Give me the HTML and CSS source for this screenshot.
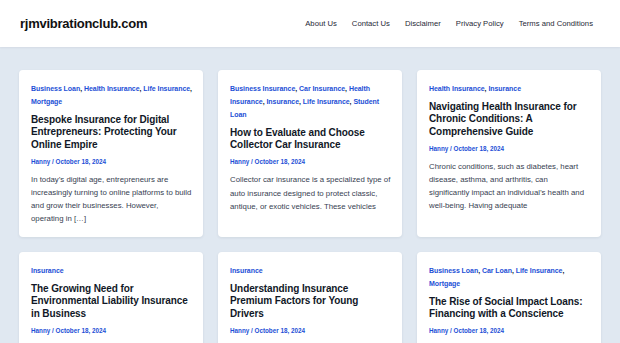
FILE: index.html
```html
<!DOCTYPE html>
<html lang="en">
<head>
<meta charset="utf-8">
<title>rjmvibrationclub.com</title>
<link rel="stylesheet" href="styles.css">
</head>
<body>
<header class="site-header">
  <a class="logo" href="#">rjmvibrationclub.com</a>
  <nav class="nav">
    <a href="#">About Us</a>
    <a href="#">Contact Us</a>
    <a href="#">Disclaimer</a>
    <a href="#">Privacy Policy</a>
    <a href="#">Terms and Conditions</a>
  </nav>
</header>
<main class="grid">
  <article class="card">
    <div class="cats"><a href="#">Business Loan</a>, <a href="#">Health Insurance</a>, <a href="#">Life Insurance</a>, <a href="#">Mortgage</a></div>
    <h2 class="title">Bespoke Insurance for Digital Entrepreneurs: Protecting Your Online Empire</h2>
    <div class="meta">Hanny / October 18, 2024</div>
    <p class="excerpt">In today’s digital age, entrepreneurs are increasingly turning to online platforms to build and grow their businesses. However, operating in […]</p>
  </article>
  <article class="card">
    <div class="cats"><a href="#">Business Insurance</a>, <a href="#">Car Insurance</a>, <a href="#">Health Insurance</a>, <a href="#">Insurance</a>, <a href="#">Life Insurance</a>, <a href="#">Student Loan</a></div>
    <h2 class="title">How to Evaluate and Choose Collector Car Insurance</h2>
    <div class="meta">Hanny / October 18, 2024</div>
    <p class="excerpt">Collector car insurance is a specialized type of auto insurance designed to protect classic, antique, or exotic vehicles. These vehicles</p>
  </article>
  <article class="card">
    <div class="cats"><a href="#">Health Insurance</a>, <a href="#">Insurance</a></div>
    <h2 class="title">Navigating Health Insurance for Chronic Conditions: A Comprehensive Guide</h2>
    <div class="meta">Hanny / October 18, 2024</div>
    <p class="excerpt">Chronic conditions, such as diabetes, heart disease, asthma, and arthritis, can significantly impact an individual’s health and well-being. Having adequate</p>
  </article>
  <article class="card">
    <div class="cats"><a href="#">Insurance</a></div>
    <h2 class="title">The Growing Need for Environmental Liability Insurance in Business</h2>
    <div class="meta">Hanny / October 18, 2024</div>
    <p class="excerpt">As environmental concerns continue to grow, businesses face increasing scrutiny over their impact on the planet.</p>
  </article>
  <article class="card">
    <div class="cats"><a href="#">Insurance</a></div>
    <h2 class="title">Understanding Insurance Premium Factors for Young Drivers</h2>
    <div class="meta">Hanny / October 18, 2024</div>
    <p class="excerpt">Insurance premiums for young drivers are often significantly higher than those for more experienced drivers.</p>
  </article>
  <article class="card">
    <div class="cats"><a href="#">Business Loan</a>, <a href="#">Car Loan</a>, <a href="#">Life Insurance</a>, <a href="#">Mortgage</a></div>
    <h2 class="title">The Rise of Social Impact Loans: Financing with a Conscience</h2>
    <div class="meta">Hanny / October 18, 2024</div>
    <p class="excerpt">Social impact loans are a growing trend in the financial world, blending profit with purpose.</p>
  </article>
</main>
</body>
</html>
```
FILE: styles.css
```css
* { box-sizing: border-box; }
html, body { margin: 0; padding: 0; }
body {
  background: #e0e8f1;
  font-family: "Liberation Sans", Arial, Helvetica, sans-serif;
  color: #111827;
}
a { text-decoration: none; color: inherit; }

.site-header {
  height: 47px;
  background: #ffffff;
  display: flex;
  align-items: center;
  justify-content: space-between;
  padding: 0 27px 0 20px;
  box-shadow: 0 1px 2px rgba(15, 23, 42, 0.06);
}
.logo {
  font-size: 13px;
  font-weight: 700;
  color: #111111;
  letter-spacing: -0.25px;
}
.nav {
  display: flex;
  gap: 15px;
  font-size: 7.7px;
  color: #1f2937;
}

.grid {
  display: grid;
  grid-template-columns: repeat(3, 184px);
  column-gap: 15px;
  row-gap: 15.5px;
  padding: 23px 19px;
}
.card {
  background: #ffffff;
  border-radius: 4px;
  padding: 12px 11px 11px 12px;
  box-shadow: 0 1px 3px rgba(15, 23, 42, 0.08);
}
.cats {
  font-size: 7px;
  font-weight: 700;
  line-height: 13px;
  letter-spacing: -0.05px;
  color: #111827;
}
.cats a { color: #1d4fd6; }
.title {
  margin: 6px 0 0;
  font-size: 10px;
  font-weight: 700;
  line-height: 12.4px;
  letter-spacing: -0.1px;
  color: #111827;
}
.meta {
  margin-top: 3.5px;
  font-size: 6.3px;
  font-weight: 700;
  line-height: 13px;
  color: #1d4fd6;
}
.excerpt {
  margin: 5px 0 0;
  font-size: 7.8px;
  line-height: 13.2px;
  color: #374151;
}
```
